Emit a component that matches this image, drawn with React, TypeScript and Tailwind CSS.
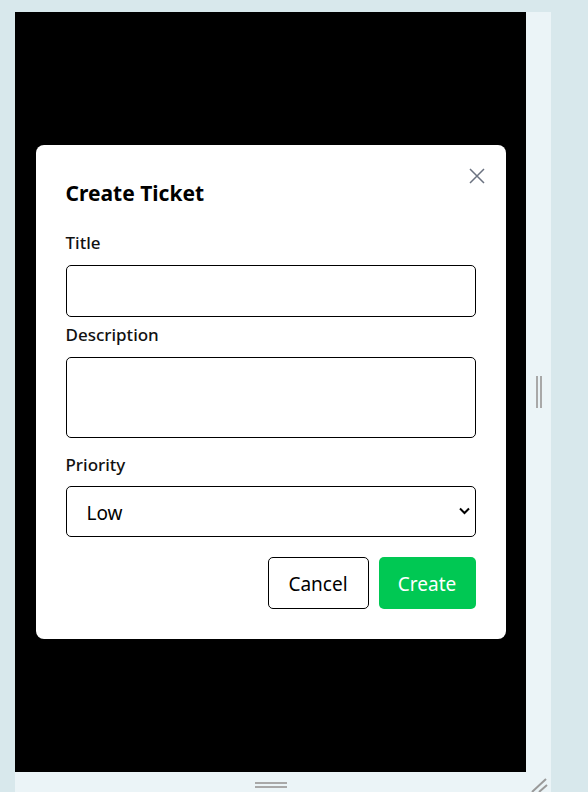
import React from "react";

export default function App() {
  const font = { fontFamily: '"Noto Sans", "Open Sans", sans-serif' };
  return (
    <div className="w-[588px] h-[792px] bg-[#d8e8ec] overflow-hidden pt-[12px] pl-[15px]" style={font}>
      <div className="w-[536px] h-[780px] bg-[#ebf4f7] flex flex-col">
        <div className="flex h-[760px]">
          <div className="w-[511px] h-[760px] bg-black flex items-center justify-center">
            <div className="relative w-[470px] bg-white rounded-[8px] px-[30px] pt-[34px] pb-[30px]">
              <button className="absolute right-[19px] top-[21px] w-[20px] h-[20px] flex items-center justify-center text-[#6b7280]">
                <svg width="18" height="18" viewBox="0 0 18 18" fill="none" stroke="currentColor" strokeWidth="1.5">
                  <path d="M2 2 L16 16 M16 2 L2 16" />
                </svg>
              </button>
              <h2 className="text-[21px] leading-[28px] font-bold text-black">Create Ticket</h2>
              <label className="block mt-[24px] text-[17px] leading-[24px] font-medium text-[#111]">Title</label>
              <input className="block mt-[10px] w-full h-[52px] border border-black rounded-[5px] bg-white" />
              <label className="block mt-[6px] text-[17px] leading-[24px] font-medium text-[#111]">Description</label>
              <textarea className="block mt-[10px] w-full h-[81px] border border-black rounded-[5px] bg-white resize-none" />
              <label className="block mt-[15px] text-[17px] leading-[24px] font-medium text-[#111]">Priority</label>
              <div className="relative mt-[9px] w-full h-[51px] border border-black rounded-[5px] bg-white flex items-center pl-[20px] pt-[3px]">
                <span className="text-[19px] text-black">Low</span>
                <svg className="absolute right-[5px] top-[20px]" width="11" height="8" viewBox="0 0 11 8" fill="none" stroke="black" strokeWidth="2">
                  <path d="M1 1.5 L5.5 6 L10 1.5" />
                </svg>
              </div>
              <div className="mt-[20px] flex justify-end gap-[10px]">
                <button className="w-[101px] h-[52px] border border-black rounded-[5px] bg-white text-[19px] text-black pt-[2px]">Cancel</button>
                <button className="w-[97px] h-[52px] rounded-[5px] bg-[#00c853] text-[19px] text-white pt-[2px]">Create</button>
              </div>
            </div>
          </div>
          <div className="flex-1 flex items-center justify-center">
            <div className="flex gap-[2px] h-[32px]">
              <div className="w-[2px] h-full bg-[#a8a8a8]" />
              <div className="w-[2px] h-full bg-[#a8a8a8]" />
            </div>
          </div>
        </div>
        <div className="relative h-[20px] flex justify-center pt-[10px] pr-[25px]">
          <div className="flex flex-col gap-[2px] w-[32px]">
            <div className="h-[2px] bg-[#a8a8a8]" />
            <div className="h-[2px] bg-[#a8a8a8]" />
          </div>
          <svg className="absolute right-[3px] bottom-0" width="18" height="16" viewBox="0 0 18 16" fill="none" stroke="#9a9a9a" strokeWidth="2">
            <path d="M2 16 L16 3 M9 16 L17 9" />
          </svg>
        </div>
      </div>
    </div>
  );
}
